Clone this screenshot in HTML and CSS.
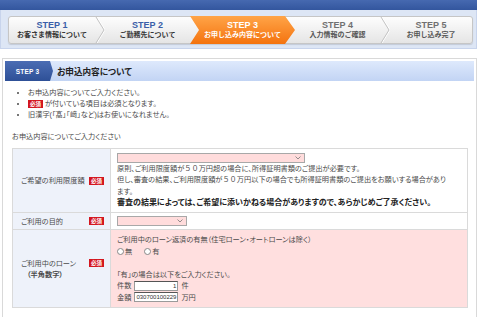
FILE: index.html
```html
<!DOCTYPE html>
<html lang="ja">
<head>
    <meta charset="UTF-8">
    <title>お申込内容について</title>
    <link rel="stylesheet" href="styles.css">
</head>
<body>
    <div class="page">
        <div class="topbar"></div>
        <div class="stepband">
            <ol class="steps">
                <li class="step step-1">
                    <span class="step-no">STEP 1</span>
                    <span class="step-name">お客さま情報について</span>
                </li>
                <li class="sep"><svg width="10" height="26" viewBox="0 0 10 26"><polyline points="2,0 10,13 2,26" fill="none" stroke="#fff" stroke-width="1"/><polyline points="1,0 9,13 1,26" fill="none" stroke="#c2c2c2" stroke-width="1"/></svg></li>
                <li class="step step-2">
                    <span class="step-no">STEP 2</span>
                    <span class="step-name">ご勤務先について</span>
                </li>
                <li class="step current">
                    <span class="step-no">STEP 3</span>
                    <span class="step-name">お申し込み内容について</span>
                </li>
                <li class="step todo step-4">
                    <span class="step-no">STEP 4</span>
                    <span class="step-name">入力情報のご確認</span>
                </li>
                <li class="sep"><svg width="10" height="26" viewBox="0 0 10 26"><polyline points="2,0 10,13 2,26" fill="none" stroke="#fff" stroke-width="1"/><polyline points="1,0 9,13 1,26" fill="none" stroke="#c2c2c2" stroke-width="1"/></svg></li>
                <li class="step todo step-5">
                    <span class="step-no">STEP 5</span>
                    <span class="step-name">お申し込み完了</span>
                </li>
            </ol>
        </div>

        <div class="section">
            <div class="sec-head">
                <span class="sec-step">STEP 3</span>
                <h2 class="sec-title">お申込内容について</h2>
            </div>
            <div class="sec-body">
                <ul class="notes">
                    <li>お申込内容についてご入力ください。</li>
                    <li><span class="req">必須</span> が付いている項目は必須となります。</li>
                    <li>旧漢字(「髙」「﨑」など)はお使いになれません。</li>
                </ul>
                <p class="lead">お申込内容についてご入力ください</p>

                <table class="form-table">
                    <tr class="row-limit">
                        <th><div class="label"><span>ご希望の利用限度額</span><span class="req">必須</span></div></th>
                        <td>
                            <div class="select select-wide"><svg width="6" height="4" viewBox="0 0 6 4"><polyline points="0.5,0.5 3,3 5.5,0.5" fill="none" stroke="#777" stroke-width="0.8"/></svg></div>
                            <p class="text">原則、ご利用限度額が<span class="wide">５０</span>万円超の場合に、所得証明書類のご提出が必要です。<br>但し、審査の結果、ご利用限度額が<span class="wide">５０</span>万円以下の場合でも所得証明書類のご提出をお願いする場合があり<br>ます。</p>
                            <p class="text strong">審査の結果によっては、ご希望に添いかねる場合がありますので、あらかじめご了承ください。</p>
                        </td>
                    </tr>
                    <tr class="row-purpose">
                        <th><div class="label"><span>ご利用の目的</span><span class="req">必須</span></div></th>
                        <td>
                            <div class="select select-short"><svg width="6" height="4" viewBox="0 0 6 4"><polyline points="0.5,0.5 3,3 5.5,0.5" fill="none" stroke="#777" stroke-width="0.8"/></svg></div>
                        </td>
                    </tr>
                    <tr class="row-loan">
                        <th><div class="label label-top"><span>ご利用中のローン<br><b class="sub">（半角数字）</b></span><span class="req">必須</span></div></th>
                        <td>
                            <p class="line">ご利用中のローン返済の有無（住宅ローン・オートローンは除く）</p>
                            <p class="line radios"><span class="radio"></span>無<span class="radio radio-2"></span>有</p>
                            <p class="line">&nbsp;</p>
                            <p class="line">「有」の場合は以下をご入力ください。</p>
                            <p class="line field">件数 <span class="num num-right">1</span> 件</p>
                            <p class="line field">金額 <span class="num">030700100229</span> 万円</p>
                        </td>
                    </tr>
                </table>
            </div>
        </div>
    </div>
</body>
</html>
```

FILE: styles.css
```css
:root {
    --blue: #3a5ea8;
    --border: #dadada;
    --pink: #ffdfdf;
    --red: #d3161e;
}

body {
    margin: 0;
    font-family: 'Liberation Sans', 'Noto Sans CJK JP', sans-serif;
    font-size: 7.2px;
    color: #4a4a4a;
    font-feature-settings: "palt";
}

.page {
    width: 477px;
}

.topbar {
    height: 10px;
    background: linear-gradient(#4669b0, #33569e);
}

.stepband {
    background: #dde6f5;
    border: 1px solid #c8d4ec;
    border-top: none;
    padding: 6px 3px 4px 7px;
}

.steps {
    display: flex;
    height: 28px;
    margin: 0;
    padding: 0;
    list-style: none;
    box-sizing: border-box;
    border: 1px solid #c6c6c6;
    border-radius: 3px;
    background: linear-gradient(#fdfdfd, #e5e5e5);
    box-shadow: 0 1px 1px rgba(0, 0, 0, 0.12);
}

.step {
    width: 86px;
    display: flex;
    flex-direction: column;
    align-items: center;
    justify-content: center;
    flex-shrink: 0;
}

.step-2,
.step-4 {
    width: 85px;
}

.step-5 {
    flex: 1;
}

.step-no {
    font-size: 9px;
    line-height: 10px;
    font-weight: bold;
    color: var(--blue);
}

.step-name {
    font-size: 7px;
    line-height: 10px;
    font-weight: bold;
    color: #333;
    font-feature-settings: normal;
}

.step.todo .step-no {
    color: #707070;
}

.step.todo .step-name {
    color: #555;
}

.step.current {
    width: 105px;
    margin: -1px 0;
    background: linear-gradient(#ffa447, #f4730f);
    clip-path: polygon(0 0, 95px 0, 100% 50%, 95px 100%, 0 100%, 9px 50%);
}

.step.current .step-no,
.step.current .step-name {
    color: #fff;
}

.sep {
    width: 10px;
    flex-shrink: 0;
    display: flex;
}

.section {
    margin: 9px 0 0 2px;
    border: 1px solid #d9d9d9;
    padding: 2px 2px 20px 2px;
}

.sec-head {
    display: flex;
    align-items: center;
    height: 20px;
    background: linear-gradient(#dee9fc, #c2d4f4);
}

.sec-step {
    width: 48px;
    height: 20px;
    box-sizing: border-box;
    padding-right: 3px;
    display: flex;
    align-items: center;
    justify-content: center;
    background: linear-gradient(#4b6db4, #2e5097);
    color: #fff;
    font-size: 6.5px;
    font-weight: bold;
    letter-spacing: 0.2px;
    clip-path: polygon(0 0, 45px 0, 100% 50%, 45px 100%, 0 100%);
}

.sec-title {
    margin: 0;
    padding-left: 4px;
    font-size: 8.6px;
    font-weight: bold;
    color: #222;
}

.sec-body {
    padding: 0 6px 0 7px;
}

.notes {
    margin: 6px 0 0;
    padding-left: 16px;
    line-height: 11px;
}

.req {
    display: inline-block;
    width: 15px;
    height: 8px;
    line-height: 8px;
    background: var(--red);
    color: #fff;
    font-size: 5.5px;
    font-weight: bold;
    text-align: center;
    vertical-align: 0;
}

.lead {
    margin: 11px 0 0;
    line-height: 11px;
}

.form-table {
    width: 100%;
    margin-top: 6px;
    border-collapse: collapse;
    border: 1px solid var(--border);
}

.form-table th,
.form-table td {
    border: 1px solid var(--border);
    padding: 0;
}

.form-table th {
    width: 97px;
    background: #eef2fa;
    font-weight: normal;
    text-align: left;
}

.form-table td {
    padding: 4px 6px;
    vertical-align: top;
}

.label {
    display: flex;
    justify-content: space-between;
    align-items: center;
    padding: 0 6px 0 8px;
    line-height: 11px;
}

.label-top {
    align-items: flex-start;
}

.label-top .req {
    margin-top: 1px;
}

.label .sub {
    display: inline-block;
    padding-left: 6px;
}

.select {
    height: 10px;
    box-sizing: border-box;
    border: 1px solid #a8a8a8;
    background: #ffdcdc;
    display: flex;
    align-items: center;
    justify-content: flex-end;
    padding-right: 3px;
}

.select-wide {
    width: 188px;
}

.select-short {
    width: 70px;
}

.row-purpose td {
    padding: 3px 6px 3px;
}

.text {
    margin: 0;
    line-height: 11.3px;
}

.wide {
    font-feature-settings: normal;
}

.strong {
    font-size: 8px;
    font-weight: bold;
    color: #222;
}

.row-loan td {
    background: var(--pink);
}

.line {
    margin: 0;
    line-height: 11.5px;
    height: 11.5px;
}

.radios {
    display: flex;
    align-items: center;
}

.radio {
    width: 7px;
    height: 7px;
    box-sizing: border-box;
    border: 1px solid #888;
    border-radius: 50%;
    background: #fff;
    margin-right: 1px;
}

.radio-2 {
    margin-left: 12px;
}

.field {
    display: flex;
    align-items: center;
    gap: 3px;
}

.num {
    width: 44px;
    height: 10px;
    box-sizing: border-box;
    border: 1px solid #9a9a9a;
    border-top-color: #555;
    background: #fff;
    font-size: 6px;
    line-height: 8px;
    padding: 0 1px;
    color: #333;
    font-feature-settings: normal;
}

.num-right {
    text-align: right;
}
```
